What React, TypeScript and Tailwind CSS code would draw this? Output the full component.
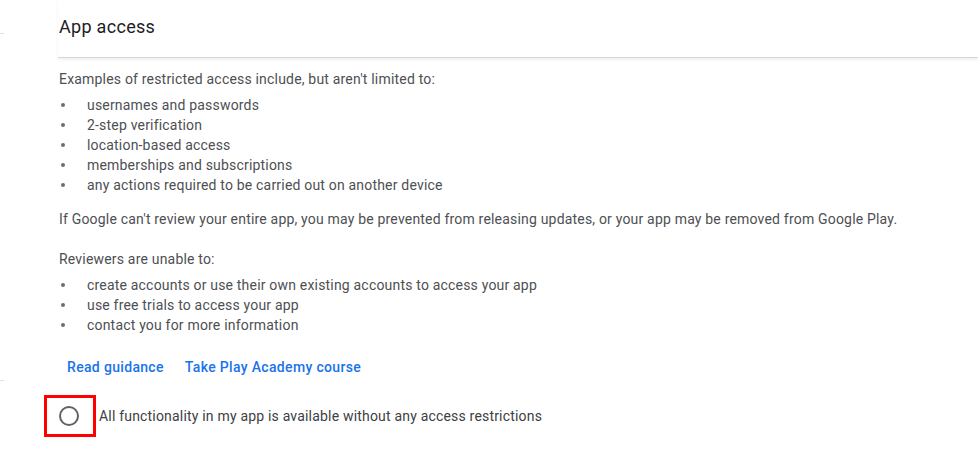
import React from 'react'

const restricted = [
  'usernames and passwords',
  '2-step verification',
  'location-based access',
  'memberships and subscriptions',
  'any actions required to be carried out on another device',
]

const unable = [
  'create accounts or use their own existing accounts to access your app',
  'use free trials to access your app',
  'contact you for more information',
]

const Bullets: React.FC<{ items: string[] }> = ({ items }) => (
  <ul className="mt-[6px]">
    {items.map((item) => (
      <li key={item} className="flex h-5 items-center">
        <span className="flex w-[28px] pl-[2px]">
          <span className="h-[4px] w-[4px] rounded-full bg-[#6b6e72]" />
        </span>
        <span>{item}</span>
      </li>
    ))}
  </ul>
)

export default function App() {
  return (
    <div className="relative h-[449px] w-[978px] overflow-hidden bg-white font-['Roboto','Liberation_Sans',sans-serif] text-[14px] tracking-[0.19px] text-[#4d4f53]">
      {/* faint marks of the side panel edge */}
      <span className="absolute left-0 top-[33px] h-px w-[4px] bg-[#e0e0e0]" />
      <span className="absolute left-0 top-[380px] h-px w-[4px] bg-[#e0e0e0]" />

      <header className="ml-[58px] flex h-[58px] items-start border-b border-[#d6d6d6] pl-[1px] pt-[15px] shadow-[0_2px_3px_rgba(0,0,0,0.06)]">
        <h1 className="text-[18px] leading-6 tracking-[0.3px] text-[#202124]">App access</h1>
      </header>

      <main className="pl-[59px] pt-[11px] leading-5">
        <p>Examples of restricted access include, but aren't limited to:</p>
        <Bullets items={restricted} />
        <p className="mt-[14px]">
          If Google can't review your entire app, you may be prevented from releasing updates, or your app may be removed from Google Play.
        </p>
        <p className="mt-5">Reviewers are unable to:</p>
        <Bullets items={unable} />

        <div className="mt-[22px] flex gap-[21px] pl-2 font-medium tracking-[0.33px] text-[#1a73e8]">
          <a href="#">Read guidance</a>
          <a href="#">Take Play Academy course</a>
        </div>

        <label className="mt-[18px] -ml-[15px] flex items-center">
          <span className="flex h-[42px] w-[52px] items-center justify-center border-[3px] border-[#ff0000]">
            <span className="-ml-[2px] h-5 w-5 rounded-full border-2 border-[#5f6368]" />
          </span>
          <span className="ml-[3px] text-[#3c4043]">
            All functionality in my app is available without any access restrictions
          </span>
        </label>
      </main>
    </div>
  )
}
